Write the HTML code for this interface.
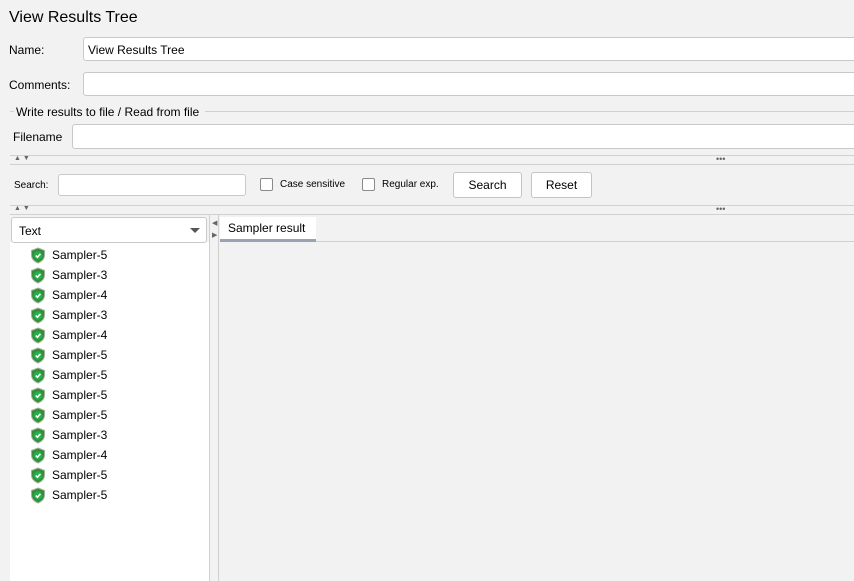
<!DOCTYPE html><html><head><style>
body{margin:0;width:854px;height:581px;background:#f2f2f2;font-family:"Liberation Sans",sans-serif;font-size:12px;color:#000;position:relative;overflow:hidden}
.a{position:absolute;white-space:nowrap}
.in{position:absolute;background:#fff;border:1px solid #c9c9c9;border-radius:3px;box-sizing:border-box;white-space:nowrap}
.cb{position:absolute;width:13px;height:13px;background:#fff;border:1px solid #8a8a8a;border-radius:2px;box-sizing:border-box}
.btn{position:absolute;background:#fff;border:1px solid #c4c4c4;border-radius:3px;box-sizing:border-box;text-align:center;font-size:12px}
.hl{position:absolute;height:1px;background:#d0d0d0}
.tri{font-size:7px;color:#666}
.item{position:absolute;left:30px;width:150px;height:20px;font-size:12px;line-height:20px;white-space:nowrap}
.item svg{position:absolute;left:0;top:2px}
.item span{position:absolute;left:22px;top:0}
</style></head><body>
<div class="a" style="left:9px;top:9px;font-size:16px">View Results Tree</div>
<div class="a" style="left:9px;top:43px">Name:</div>
<div class="in" style="left:83px;top:37px;width:780px;height:24px;padding:5px 0 0 4px">View Results Tree</div>
<div class="a" style="left:9px;top:78px">Comments:</div>
<div class="in" style="left:83px;top:72px;width:780px;height:24px"></div>
<div class="hl" style="left:10px;top:111px;width:4px"></div>
<div class="hl" style="left:205px;top:111px;width:660px"></div>
<div class="a" style="left:16px;top:105px">Write results to file / Read from file</div>
<div class="a" style="left:13px;top:130px">Filename</div>
<div class="in" style="left:72px;top:124px;width:790px;height:25px"></div>
<div class="hl" style="left:10px;top:155px;width:844px"></div>
<div class="a tri" style="left:14px;top:155px">▲ ▼</div>
<div class="a tri" style="left:716px;top:154px;font-size:9px">•••</div>
<div class="hl" style="left:10px;top:164px;width:844px"></div>
<div class="a" style="left:14px;top:180px;font-size:10px">Search:</div>
<div class="in" style="left:58px;top:174px;width:188px;height:22px"></div>
<div class="cb" style="left:260px;top:178px"></div>
<div class="a" style="left:280px;top:179px;font-size:10px">Case sensitive</div>
<div class="cb" style="left:362px;top:178px"></div>
<div class="a" style="left:382px;top:179px;font-size:10px">Regular exp.</div>
<div class="btn" style="left:453px;top:172px;width:69px;height:26px;line-height:24px">Search</div>
<div class="btn" style="left:531px;top:172px;width:61px;height:26px;line-height:24px">Reset</div>
<div class="hl" style="left:10px;top:205px;width:844px"></div>
<div class="a tri" style="left:14px;top:205px">▲ ▼</div>
<div class="a tri" style="left:716px;top:204px;font-size:9px">•••</div>
<div class="hl" style="left:10px;top:214px;width:844px"></div>
<div class="a" style="left:10px;top:242px;width:199px;height:339px;background:#fff"></div>
<div class="in" style="left:11px;top:217px;width:196px;height:26px;padding:6px 0 0 7px">Text</div>
<div class="a" style="left:190px;top:228px;width:0;height:0;border-left:5px solid transparent;border-right:5px solid transparent;border-top:5px solid #555"></div>
<div class="a" style="left:209px;top:215px;width:1px;height:366px;background:#d0d0d0"></div>
<div class="a" style="left:218px;top:215px;width:1px;height:366px;background:#d0d0d0"></div>
<div class="a tri" style="left:212px;top:218px;line-height:12px">◀<br>▶</div>
<div class="a" style="left:220px;top:217px;width:96px;background:#fff;border-bottom:3px solid #9aa3b3;padding:4px 0 0 8px;box-sizing:border-box;height:25px">Sampler result</div>
<div class="hl" style="left:316px;top:241px;width:538px"></div>
<svg width="0" height="0" style="position:absolute"><defs><g id="ic"><path d="M8 1 L14.5 3.5 V8 C14.5 12 11.5 14.5 8 16 C4.5 14.5 1.5 12 1.5 8 V3.5 Z" fill="#3a8a3a" stroke="#9ab59a" stroke-width="1"/><circle cx="8" cy="8.5" r="4.3" fill="#22b24c"/><path d="M5.8 8.6 L7.4 10.2 L10.4 6.9" stroke="#fff" stroke-width="1.6" fill="none"/></g></defs></svg>
<div class="item" style="top:245px"><svg width="16" height="17"><use href="#ic"/></svg><span>Sampler-5</span></div>
<div class="item" style="top:265px"><svg width="16" height="17"><use href="#ic"/></svg><span>Sampler-3</span></div>
<div class="item" style="top:285px"><svg width="16" height="17"><use href="#ic"/></svg><span>Sampler-4</span></div>
<div class="item" style="top:305px"><svg width="16" height="17"><use href="#ic"/></svg><span>Sampler-3</span></div>
<div class="item" style="top:325px"><svg width="16" height="17"><use href="#ic"/></svg><span>Sampler-4</span></div>
<div class="item" style="top:345px"><svg width="16" height="17"><use href="#ic"/></svg><span>Sampler-5</span></div>
<div class="item" style="top:365px"><svg width="16" height="17"><use href="#ic"/></svg><span>Sampler-5</span></div>
<div class="item" style="top:385px"><svg width="16" height="17"><use href="#ic"/></svg><span>Sampler-5</span></div>
<div class="item" style="top:405px"><svg width="16" height="17"><use href="#ic"/></svg><span>Sampler-5</span></div>
<div class="item" style="top:425px"><svg width="16" height="17"><use href="#ic"/></svg><span>Sampler-3</span></div>
<div class="item" style="top:445px"><svg width="16" height="17"><use href="#ic"/></svg><span>Sampler-4</span></div>
<div class="item" style="top:465px"><svg width="16" height="17"><use href="#ic"/></svg><span>Sampler-5</span></div>
<div class="item" style="top:485px"><svg width="16" height="17"><use href="#ic"/></svg><span>Sampler-5</span></div>
</body></html>
